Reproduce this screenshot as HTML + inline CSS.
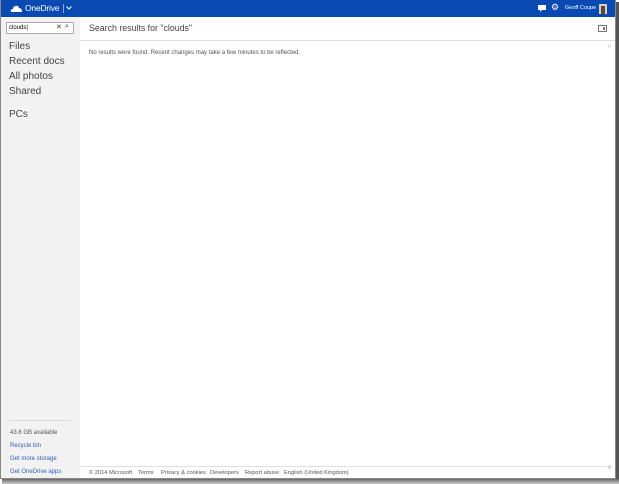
<!DOCTYPE html>
<html><head><style>
*{margin:0;padding:0;box-sizing:border-box}
body{width:619px;height:484px;position:relative;overflow:hidden;background:#fff;font-family:"Liberation Sans",sans-serif}
.frame{position:absolute;left:0;top:0;width:616px;height:479px;border:1px solid #888;border-top:none;overflow:hidden;background:#fff}
.shr{position:absolute;left:616px;top:2px;width:3px;height:482px;background:#555}
.shb{position:absolute;left:2px;top:479px;width:617px;height:5px;background:linear-gradient(#666,#ccc)}
.hdr{position:absolute;left:0;top:0;width:616px;height:17px;background:#094ab2;color:#fff}
.side{position:absolute;left:0;top:17px;width:79px;height:462px;background:#f2f2f2}
.t{position:absolute;white-space:nowrap}
.nav{font-size:10px;color:#444;left:8px}
.lk{font-size:6px;color:#2b5fb8;left:9px}
.ft{position:absolute;top:466px;left:79px;width:527px;border-top:1px solid #e0e0e0;height:13px}
.ft span{position:absolute;top:3px;font-size:5.7px;color:#555;white-space:nowrap}
</style></head><body>
<div class="frame">
<div class="hdr">
<svg style="position:absolute;left:9px;top:5px" width="13" height="7" viewBox="0 0 13 7"><path d="M1 7 Q0 4 3 4 Q3 1 6 1 Q8 0 9 3 Q12 3 12 7Z" fill="#fff"/></svg>
<div class="t" style="left:24px;top:3px;font-size:8.5px;letter-spacing:-0.2px">OneDrive</div>
<div style="position:absolute;left:62px;top:4px;width:1px;height:9px;background:#8aa6d8"></div>
<svg style="position:absolute;left:65px;top:6px" width="6" height="4"><path d="M0.5 0.5 L3 3 L5.5 0.5" stroke="#fff" fill="none"/></svg>
<svg style="position:absolute;left:537px;top:5px" width="8" height="7"><path d="M0 0h8v5H4L2 7V5H0z" fill="#fff"/></svg>
<div class="t" style="left:550px;top:2px;font-size:9px">⚙</div>
<div class="t" style="left:564px;top:5px;font-size:5.5px">Geoff Coupe</div>
<div style="position:absolute;left:598px;top:4px;width:8px;height:10px;background:#d8cfc0"><div style="margin:2px 2px;width:4px;height:8px;background:#5b4a3c"></div></div>
</div>
<div class="side">
<div style="position:absolute;left:5px;top:5px;width:68px;height:12px;background:#fff;border:1px solid #aaa"></div>
<div class="t" style="left:8px;top:8px;font-size:6px;color:#000">clouds|</div>
<div class="t" style="left:55px;top:6px;font-size:7px;color:#333">✕</div>
<div class="t" style="left:64px;top:6px;font-size:7px;color:#333">⌕</div>
<div class="t nav" style="top:24px">Files</div>
<div class="t nav" style="top:39px">Recent docs</div>
<div class="t nav" style="top:54px">All photos</div>
<div class="t nav" style="top:69px">Shared</div>
<div class="t nav" style="top:92px">PCs</div>
<div style="position:absolute;left:9px;top:403px;width:61px;border-top:1px solid #ddd"></div>
<div class="t" style="left:9px;top:413px;font-size:6px;color:#555">43.6 GB available</div>
<div class="t lk" style="top:426px">Recycle bin</div>
<div class="t lk" style="top:439px">Get more storage</div>
<div class="t lk" style="top:452px">Get OneDrive apps</div>
</div>
<div class="t" style="left:88px;top:23px;font-size:8.8px;color:#444">Search results for "clouds"</div>
<div style="position:absolute;left:597px;top:25px;width:9px;height:7px;border:1px solid #777"><div style="position:absolute;right:1px;top:1px;width:2px;height:3px;background:#777"></div></div>
<div style="position:absolute;left:79px;top:40px;width:537px;border-top:1px solid #ddd"></div>
<div class="t" style="left:88px;top:50px;font-size:6px;color:#555">No results were found. Recent changes may take a few minutes to be reflected.</div>
<div class="t" style="left:607px;top:45px;font-size:7px;color:#bbb">^</div>
<div class="t" style="left:607px;top:465px;font-size:6px;color:#999">v</div>
<div class="ft">
<span style="left:9px">© 2014 Microsoft</span><span style="left:58px">Terms</span><span style="left:81px">Privacy &amp; cookies</span><span style="left:130px">Developers</span><span style="left:165px">Report abuse</span><span style="left:204px">English (United Kingdom)</span>
</div>
</div>
<div class="shr"></div><div class="shb"></div>
</body></html>
